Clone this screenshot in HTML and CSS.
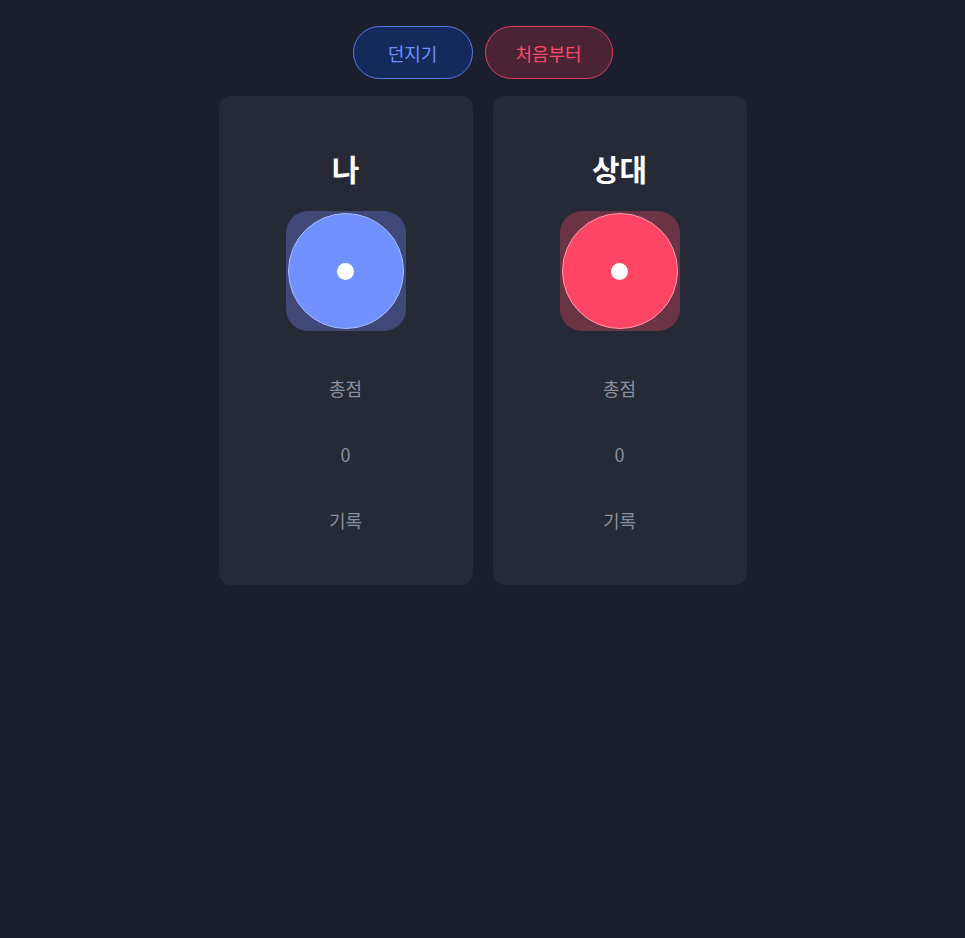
FILE: index.html
```html
<!DOCTYPE html>
<html lang="ko">
<head>
<meta charset="utf-8">
<link rel="stylesheet" href="styles.css">
</head>
<body>
<div class="controls">
  <button class="btn btn-roll">던지기</button>
  <button class="btn btn-reset">처음부터</button>
</div>
<div class="board">
  <section class="card">
    <h2 class="name">나</h2>
    <div class="die die-me"><div class="face"><span class="pip"></span></div></div>
    <p class="stat">총점</p>
    <p class="stat">0</p>
    <p class="stat">기록</p>
  </section>
  <section class="card">
    <h2 class="name">상대</h2>
    <div class="die die-op"><div class="face"><span class="pip"></span></div></div>
    <p class="stat">총점</p>
    <p class="stat">0</p>
    <p class="stat">기록</p>
  </section>
</div>
</body>
</html>
```
FILE: styles.css
```css
* { box-sizing: border-box; }
html, body { margin: 0; height: 100%; }
body {
  background: #1b1f2d;
  font-family: "Noto Sans CJK KR", "Noto Sans", sans-serif;
  padding-top: 26px;
}
.controls {
  display: flex;
  justify-content: center;
  gap: 12px;
}
.btn {
  height: 53px;
  border-radius: 27px;
  font-family: inherit;
  font-size: 18px;
  font-weight: 400;
  border: 1px solid;
  padding: 0;
}
.btn-roll {
  width: 120px;
  background: #152a5c;
  border-color: #5a7ce8;
  color: #6e8fff;
}
.btn-reset {
  width: 128px;
  background: #4a2434;
  border-color: #e2405f;
  color: #ff4a6b;
}
.board {
  display: flex;
  justify-content: center;
  gap: 20px;
  margin-top: 17px;
}
.card {
  width: 254px;
  height: 489px;
  background: #262a37;
  border-radius: 12px;
  display: flex;
  flex-direction: column;
  align-items: center;
  padding-top: 54px;
}
.name {
  margin: 0;
  color: #ffffff;
  font-size: 30px;
  font-weight: 700;
  line-height: 36px;
  height: 36px;
}
.die {
  margin-top: 25px;
  width: 120px;
  height: 120px;
  border-radius: 22px;
  display: flex;
  align-items: center;
  justify-content: center;
}
.die-me { background: #3f4877; }
.die-op { background: #6a3445; }
.face {
  width: 116px;
  height: 116px;
  border-radius: 50%;
  display: flex;
  align-items: center;
  justify-content: center;
}
.die-me .face { background: #7091ff; border: 1px solid #a9bcff; }
.die-op .face { background: #ff4566; border: 1px solid #ff9aac; }
.pip {
  width: 17px;
  height: 17px;
  border-radius: 50%;
  background: #ffffff;
}
.stat {
  margin: 41px 0 0;
  color: #8b90a0;
  font-size: 18px;
  line-height: 25px;
}
.die + .stat { margin-top: 45px; }
```
